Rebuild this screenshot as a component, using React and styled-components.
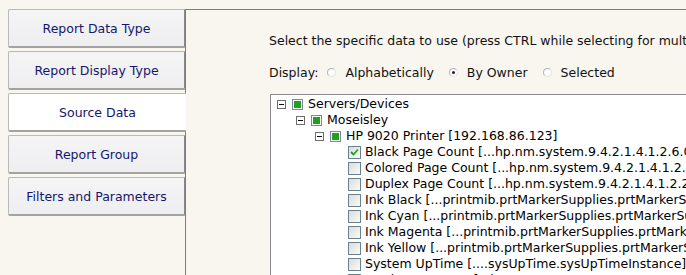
import React from 'react';
import styled, { createGlobalStyle } from 'styled-components';

const GlobalStyle = createGlobalStyle`
  html, body {
    margin: 0;
    padding: 0;
    background: #f9f6f0;
    overflow: hidden;
  }
  body {
    font-family: Verdana, 'DejaVu Sans', sans-serif;
    font-size: 12.5px;
  }
`;

const tabs = [
  'Report Data Type',
  'Report Display Type',
  'Source Data',
  'Report Group',
  'Filters and Parameters',
];

const tree = [
  { level: 0, label: 'Servers/Devices', node: true },
  { level: 1, label: 'Moseisley', node: true },
  { level: 2, label: 'HP 9020 Printer [192.168.86.123]', node: true },
  { level: 3, label: 'Black Page Count [...hp.nm.system.9.4.2.1.4.1.2.6.0]', checked: true },
  { level: 3, label: 'Colored Page Count [...hp.nm.system.9.4.2.1.4.1.2.7.0]' },
  { level: 3, label: 'Duplex Page Count [...hp.nm.system.9.4.2.1.4.1.2.22.0]' },
  { level: 3, label: 'Ink Black [...printmib.prtMarkerSupplies.prtMarkerSuppliesLevel.1.1]' },
  { level: 3, label: 'Ink Cyan [...printmib.prtMarkerSupplies.prtMarkerSuppliesLevel.1.2]' },
  { level: 3, label: 'Ink Magenta [...printmib.prtMarkerSupplies.prtMarkerSuppliesLevel.1.3]' },
  { level: 3, label: 'Ink Yellow [...printmib.prtMarkerSupplies.prtMarkerSuppliesLevel.1.4]' },
  { level: 3, label: 'System UpTime [....sysUpTime.sysUpTimeInstance]' },
  { level: 3, label: 'Total Page Count [...hp.nm.system.9.4.2.1.4.1.2.5.0]' },
];

const radios = [
  { label: 'Alphabetically' },
  { label: 'By Owner', selected: true },
  { label: 'Selected' },
];

const App = () => (
  <>
    <GlobalStyle />
    <Layout>
      <TabColumn>
        {tabs.map((t) => (
          <Tab key={t} $active={t === 'Source Data'}>{t}</Tab>
        ))}
      </TabColumn>
      <Panel>
        <Instructions>
          Select the specific data to use (press CTRL while selecting for multiple selections)
        </Instructions>
        <DisplayRow>
          <span>Display:</span>
          {radios.map((r) => (
            <RadioOption key={r.label}>
              <RadioCircle $selected={r.selected} />
              {r.label}
            </RadioOption>
          ))}
        </DisplayRow>
        <TreeBox>
          {tree.map((item) => (
            <TreeRow key={item.label} $level={item.level}>
              <ExpanderSlot>{item.node && <Expander />}</ExpanderSlot>
              {item.node ? (
                <NodeCheck />
              ) : (
                <LeafCheck>
                  {item.checked && (
                    <svg width="9" height="8" viewBox="0 0 9 8">
                      <path d="M1 4 L3.5 6.5 L8 1.5" fill="none" stroke="#21a121" strokeWidth="1.8" />
                    </svg>
                  )}
                </LeafCheck>
              )}
              <RowLabel>{item.label}</RowLabel>
            </TreeRow>
          ))}
        </TreeBox>
      </Panel>
    </Layout>
  </>
);

const Layout = styled.div`
  display: flex;
  padding: 9px 0 0 8px;
  height: 275px;
  box-sizing: border-box;
`;

const TabColumn = styled.div`
  display: flex;
  flex-direction: column;
  gap: 3px;
  width: 177px;
  flex-shrink: 0;
`;

const Tab = styled.div`
  height: 39px;
  box-sizing: border-box;
  display: flex;
  align-items: center;
  justify-content: center;
  color: #15156e;
  background: ${(p) => (p.$active ? '#ffffff' : 'linear-gradient(#f5f5f6, #eeeef0)')};
  border: 1px solid #b9b9b9;
  border-bottom: 2px solid #a3a3a3;
  border-right: ${(p) => (p.$active ? 'none' : '1px solid #8a8a8a')};
  border-radius: 2px 0 0 2px;
  margin-right: ${(p) => (p.$active ? '-1px' : '0')};
  position: relative;
  z-index: 1;
`;

const Panel = styled.div`
  flex: 1;
  min-width: 0;
  border-top: 1px solid #7d7d7d;
  border-left: 1px solid #7d7d7d;
  padding: 23px 0 0 83px;
  display: flex;
  flex-direction: column;
  overflow: hidden;
`;

const Instructions = styled.div`
  color: #111;
  white-space: nowrap;
  line-height: 15px;
`;

const DisplayRow = styled.div`
  display: flex;
  align-items: center;
  margin-top: 17px;
  color: #111;
  white-space: nowrap;
  line-height: 15px;
  gap: 9px;
`;

const RadioOption = styled.label`
  display: flex;
  align-items: center;
  gap: 9px;
  margin-right: 6px;
`;

const RadioCircle = styled.span`
  width: 9px;
  height: 9px;
  border-radius: 50%;
  box-sizing: border-box;
  border: 1px solid;
  border-color: #b4b4b4 #e4e4e4 #e4e4e4 #b4b4b4;
  background: #fcfcfc;
  display: flex;
  align-items: center;
  justify-content: center;
  &::after {
    content: '';
    display: ${(p) => (p.$selected ? 'block' : 'none')};
    width: 3px;
    height: 3px;
    border-radius: 50%;
    background: #222;
  }
`;

const TreeBox = styled.div`
  margin-top: 14px;
  margin-left: 1px;
  width: 600px;
  flex: 1;
  background: #ffffff;
  border: 1px solid #8c8c8c;
  border-right: none;
  border-bottom: none;
  padding: 1px 0 0 6px;
`;

const TreeRow = styled.div`
  display: flex;
  align-items: center;
  height: 16px;
  padding-left: ${(p) => p.$level * 19}px;
  white-space: nowrap;
`;

const ExpanderSlot = styled.span`
  width: 15px;
  flex-shrink: 0;
  display: flex;
  align-items: center;
`;

const Expander = styled.span`
  width: 9px;
  height: 9px;
  box-sizing: border-box;
  border: 1px solid #6e6e6e;
  background: #fff;
  display: flex;
  align-items: center;
  justify-content: center;
  &::after {
    content: '';
    width: 5px;
    height: 1px;
    background: #111;
  }
`;

const NodeCheck = styled.span`
  width: 11px;
  height: 11px;
  box-sizing: border-box;
  border: 1px solid #7a8a98;
  background: #fff;
  padding: 1px;
  margin-right: 5px;
  flex-shrink: 0;
  &::after {
    content: '';
    display: block;
    width: 7px;
    height: 7px;
    background: #1fa01f;
  }
`;

const LeafCheck = styled.span`
  width: 13px;
  height: 13px;
  box-sizing: border-box;
  border: 1px solid #6b7f92;
  background: linear-gradient(135deg, #dcdcd6, #fafaf8);
  margin-left: -1px;
  margin-right: 4px;
  flex-shrink: 0;
  display: flex;
  align-items: center;
  justify-content: center;
`;

const RowLabel = styled.span`
  color: #000;
  line-height: 16px;
`;

export default App;
